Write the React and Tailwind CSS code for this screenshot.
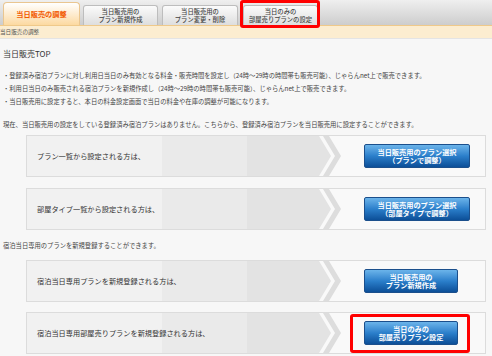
import React from "react";

const tabs = [
  { lines: ["当日販売用の", "プラン新規作成"], w: "w-[75px]", ml: "ml-[3px]" },
  { lines: ["当日販売用の", "プラン変更・削除"], w: "w-[76px]", ml: "ml-[4px]" },
  { lines: ["当日のみの", "部屋売りプランの設定"], w: "w-[75px]", ml: "ml-[5px]", marked: true },
];

const rows1 = [
  { label: "プラン一覧から設定される方は、", btn: ["当日販売用のプラン選択", "（プランで調整）"], wide: true },
  { label: "部屋タイプ一覧から設定される方は、", btn: ["当日販売用のプラン選択", "（部屋タイプで調整）"], wide: true },
];

const rows2 = [
  { label: "宿泊当日専用プランを新規登録される方は、", btn: ["当日販売用の", "プラン新規作成"] },
  { label: "宿泊当日専用部屋売りプランを新規登録される方は、", btn: ["当日のみの", "部屋売りプラン設定"], marked: true },
];

function Band() {
  return (
    <svg className="absolute left-0 top-0" width="316" height="40" viewBox="0 0 316 40">
      <rect x="0" y="0" width="135" height="40" fill="#f1f1f1" />
      <rect x="135" y="0" width="85" height="40" fill="#eaeaea" />
      <polygon points="220,0 292,0 304,20 292,40 220,40" fill="#e3e3e3" />
      <polygon points="296,0 302,0 314,20 302,40 296,40 308,20" fill="#dddddd" />
    </svg>
  );
}

function Row({ label, btn, wide, marked }) {
  return (
    <div className="relative flex h-[42px] items-center border border-[#dcdcdc] bg-[#f9f9f9]">
      <Band />
      <span className="relative flex-1 pl-[10px] text-[7.2px] text-[#333]">{label}</span>
      <div className={`relative ${wide ? "mr-[15px]" : "mr-[27px]"}`}>
        <div
          className={`flex h-[24px] flex-col items-center justify-center rounded-[2px] border border-[#1b4f8c] bg-gradient-to-b from-[#6bb4ea] via-[#2b7fcb] to-[#0c4f98] text-[7.2px] font-bold leading-[8.5px] text-white ${
            wide ? "w-[106px]" : "w-[94px]"
          }`}
        >
          {btn.map((t) => (
            <span key={t}>{t}</span>
          ))}
        </div>
        {marked && (
          <div className="absolute -left-[14px] -right-[12px] -top-[7px] -bottom-[8px] rounded-[3px] border-[3px] border-[#ff0000]" />
        )}
      </div>
    </div>
  );
}

export default function App() {
  return (
    <div className="relative h-[356px] w-[492px] overflow-hidden bg-[#f7f7f7] font-['Noto_Sans_CJK_JP',sans-serif] text-[#444]">
      {/* tab bar */}
      <div className="flex h-[25px] items-end bg-gradient-to-b from-[#efefef] to-[#cdcdcd] pl-[3px]">
        <div className="flex h-[23px] w-[77px] items-center justify-center rounded-t-[4px] border border-b-0 border-[#eac690] bg-gradient-to-b from-[#ffffff] to-[#fcd9a0] text-[7.2px] font-bold text-[#f25a00]">
          当日販売の調整
        </div>
        {tabs.map((t) => (
          <div key={t.lines[1]} className={`relative ${t.ml}`}>
            <div
              className={`flex h-[20px] ${t.w} flex-col items-center justify-center rounded-t-[3px] border border-b-0 border-[#bdbdbd] bg-gradient-to-b from-[#fbfbfb] to-[#dedede] text-[6.3px] font-medium leading-[7.5px] text-[#444]`}
            >
              {t.lines.map((l) => (
                <span key={l}>{l}</span>
              ))}
            </div>
            {t.marked && (
              <div className="absolute -left-[3px] -right-[2px] -top-[5px] -bottom-[3px] rounded-[3px] border-[3px] border-[#ff0000]" />
            )}
          </div>
        ))}
      </div>
      {/* sub bar */}
      <div className="flex h-[13px] items-center border-t border-[#efc98a] bg-[#fcedd0] text-[5.6px] text-[#555]">
        当日販売の調整
      </div>
      <div className="h-px bg-[#e4e4e4]" />

      <div className="px-[3px] pt-[10px]">
        <div className="text-[8px] leading-[10px] text-[#333]">当日販売TOP</div>
        <div className="mt-[10px] text-[6.3px] leading-[13px]">
          <div>・登録済み宿泊プランに対し利用日当日のみ有効となる料金・販売時間を設定し（24時～29時の時間帯も販売可能）、じゃらんnet上で販売できます。</div>
          <div>・利用日当日のみ販売される宿泊プランを新規作成し（24時～29時の時間帯も販売可能）、じゃらんnet上で販売できます。</div>
          <div>・当日販売用に設定すると、本日の料金設定画面で当日の料金や在庫の調整が可能になります。</div>
        </div>
        <div className="mt-[10px] text-[6.3px] leading-[13px]">
          現在、当日販売用の設定をしている登録済み宿泊プランはありません。こちらから、登録済み宿泊プランを当日販売用に設定することができます。
        </div>
        <div className="ml-[23px] mr-[3px] mt-[4px] flex flex-col gap-[11px]">
          {rows1.map((r) => (
            <Row key={r.label} {...r} />
          ))}
        </div>
        <div className="mt-[9px] text-[6.3px] leading-[13px]">宿泊当日専用のプランを新規登録することができます。</div>
        <div className="ml-[23px] mr-[3px] mt-[8px] flex flex-col gap-[10px]">
          {rows2.map((r) => (
            <Row key={r.label} {...r} />
          ))}
        </div>
      </div>
    </div>
  );
}
